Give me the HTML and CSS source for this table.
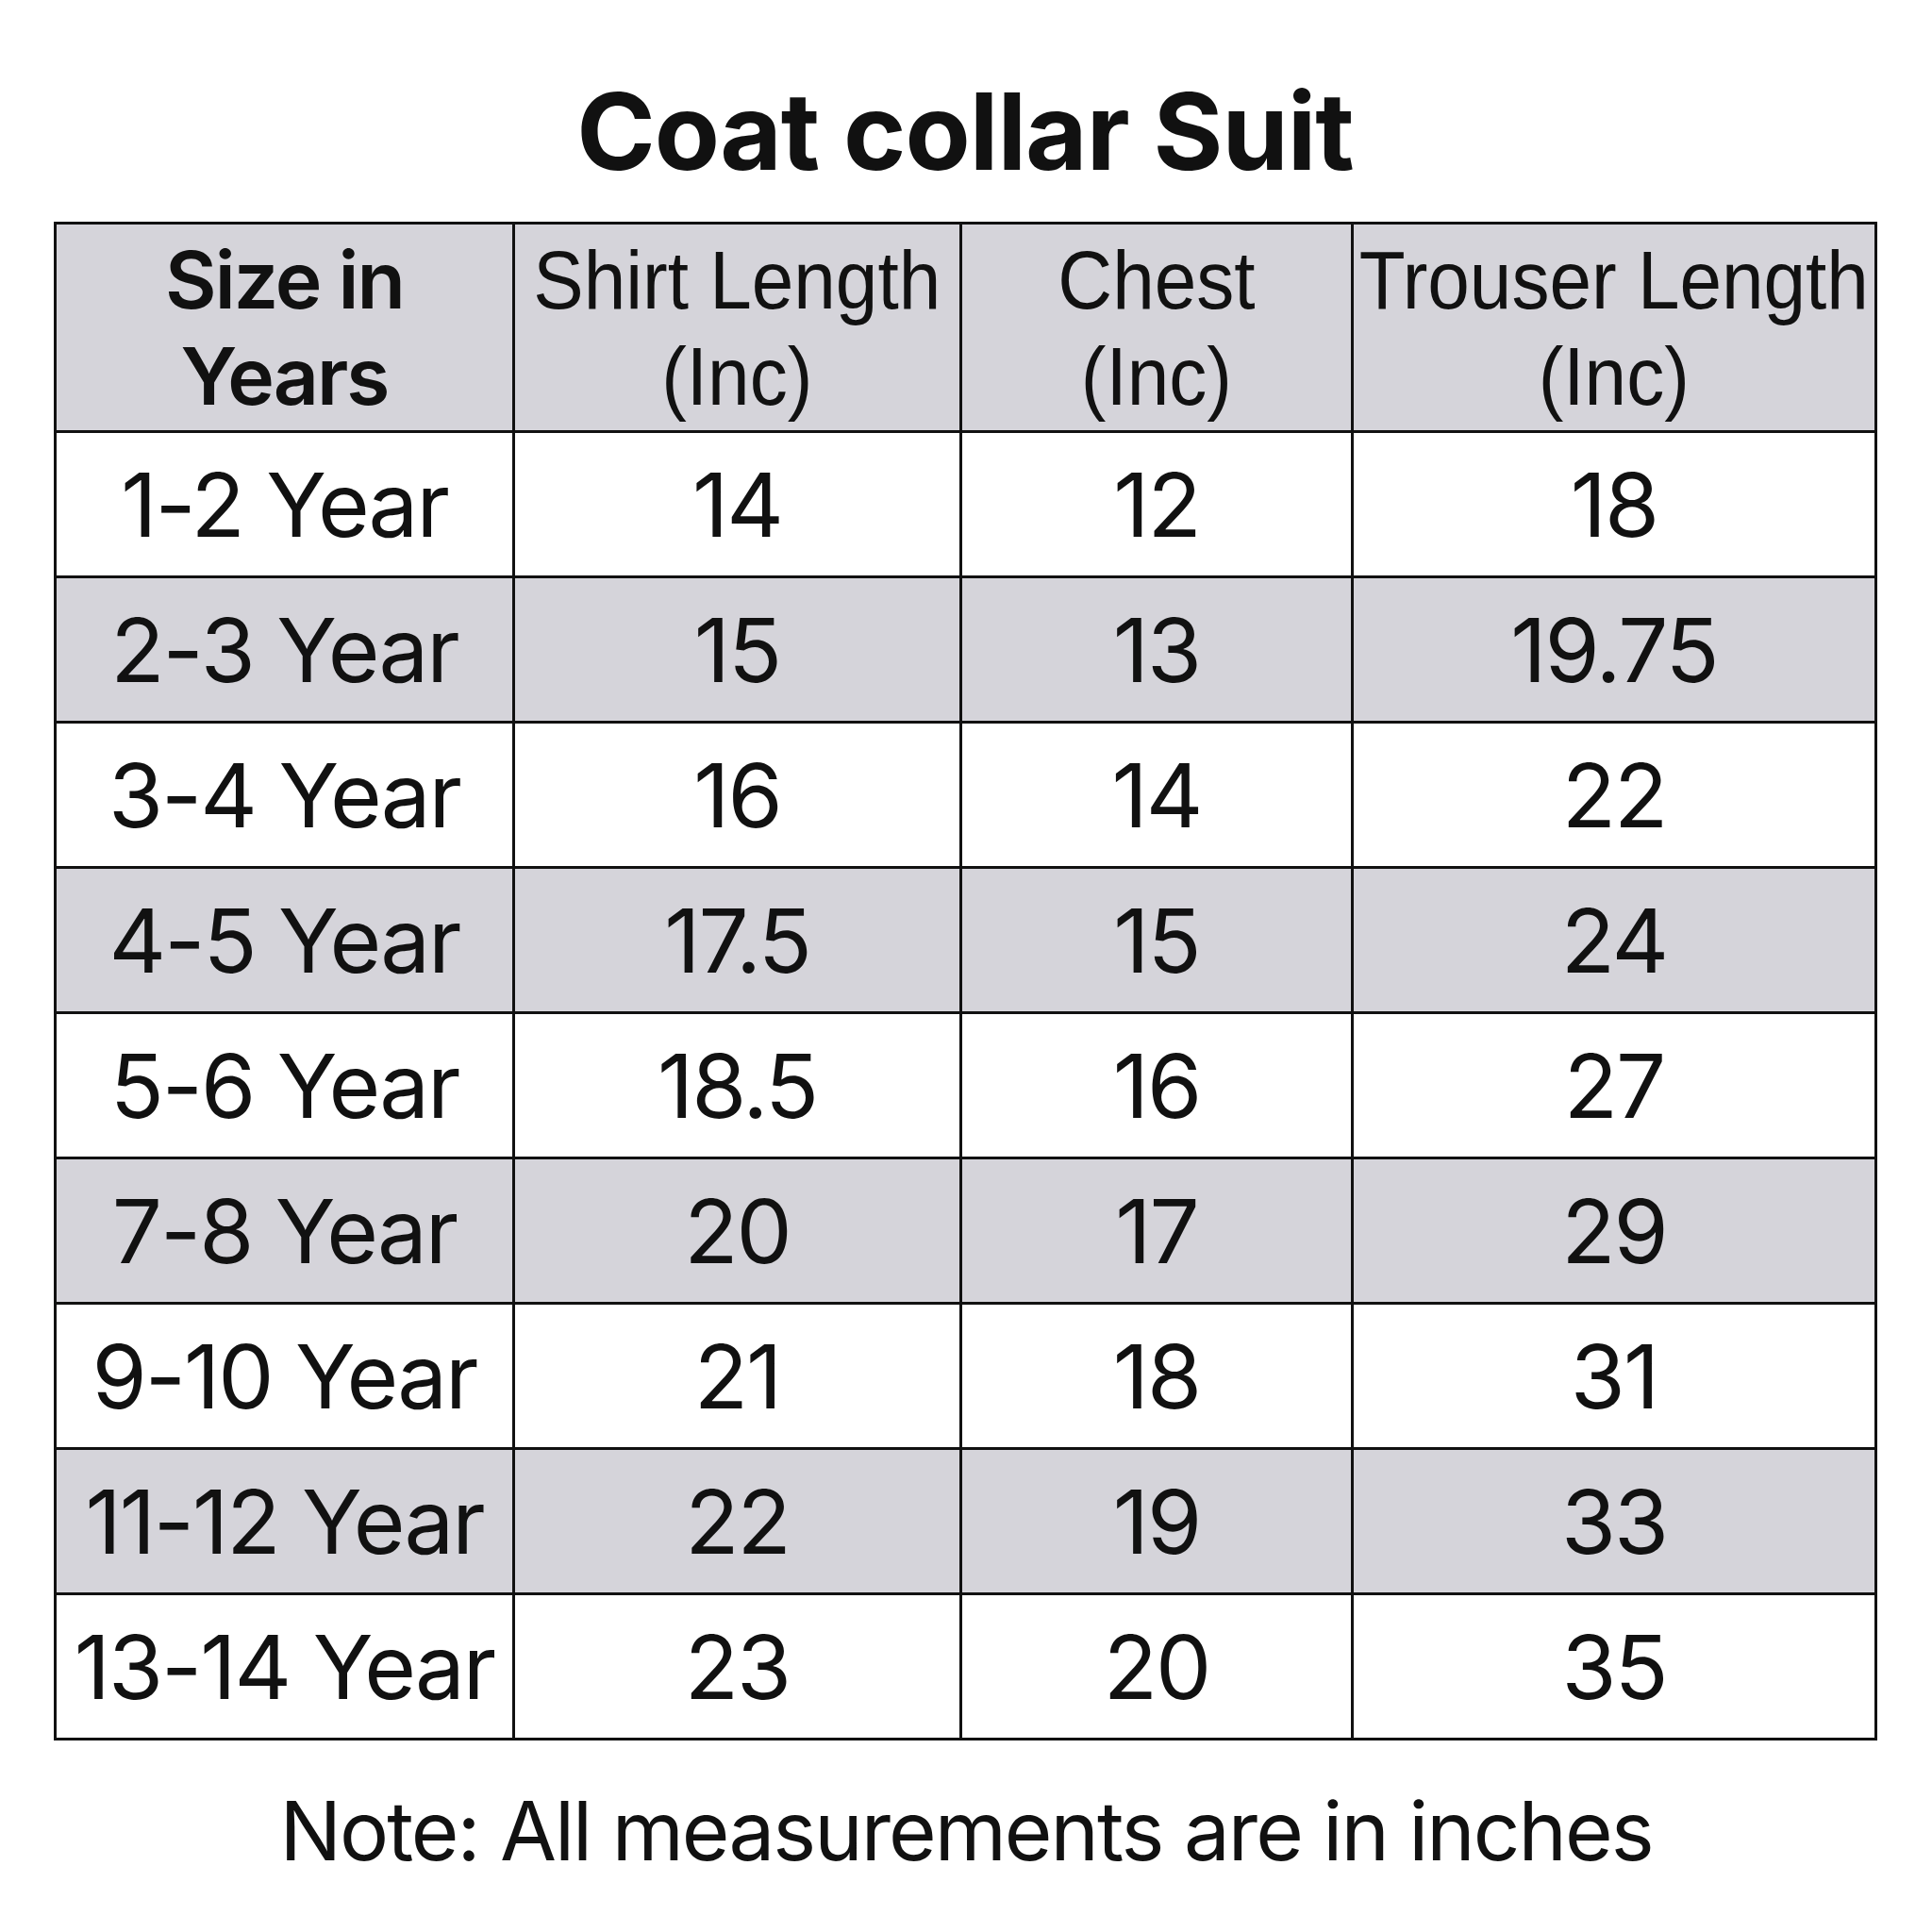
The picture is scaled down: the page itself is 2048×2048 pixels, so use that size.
FILE: index.html
```html
<!DOCTYPE html>
<html lang="en">
<head>
<meta charset="utf-8">
<title>Coat collar Suit</title>
<link rel="stylesheet" href="styles.css">
</head>
<body>
<main class="page">
  <h1 class="title">Coat collar Suit</h1>
  <table class="chart">
    <colgroup>
      <col class="c1"><col class="c2"><col class="c3"><col class="c4">
    </colgroup>
    <thead>
      <tr>
        <th class="first">Size in<br>Years</th>
        <th><div class="hcell"><span class="hd">Shirt Length<br>(Inc)</span></div></th>
        <th><div class="hcell"><span class="hd">Chest<br>(Inc)</span></div></th>
        <th><div class="hcell"><span class="hd">Trouser Length<br>(Inc)</span></div></th>
      </tr>
    </thead>
    <tbody>
      <tr><td>1-2 Year</td><td>14</td><td>12</td><td>18</td></tr>
      <tr class="shade"><td>2-3 Year</td><td>15</td><td>13</td><td>19.75</td></tr>
      <tr><td>3-4 Year</td><td>16</td><td>14</td><td>22</td></tr>
      <tr class="shade"><td>4-5 Year</td><td>17.5</td><td>15</td><td>24</td></tr>
      <tr><td>5-6 Year</td><td>18.5</td><td>16</td><td>27</td></tr>
      <tr class="shade"><td>7-8 Year</td><td>20</td><td>17</td><td>29</td></tr>
      <tr><td>9-10 Year</td><td>21</td><td>18</td><td>31</td></tr>
      <tr class="shade"><td>11-12 Year</td><td>22</td><td>19</td><td>33</td></tr>
      <tr><td>13-14 Year</td><td>23</td><td>20</td><td>35</td></tr>
    </tbody>
  </table>
  <p class="note">Note: All measurements are in inches</p>
</main>
</body>
</html>
```
FILE: styles.css
```css
html, body {
  margin: 0;
  padding: 0;
  background: #ffffff;
}

.page {
  width: 2048px;
  min-height: 2048px;
  padding-top: 69px;
  box-sizing: border-box;
  display: flex;
  flex-direction: column;
  align-items: flex-start;
  font-family: Inter, "Liberation Sans", sans-serif;
  color: #111111;
}

.title {
  align-self: center;
  margin: 0;
  font-size: 113px;
  line-height: 140px;
  font-weight: 700;
  letter-spacing: -1px;
  transform: translateX(-1px);
}

.chart {
  margin: 26px 0 0 57px;
  width: 1933px;
  table-layout: fixed;
  border-collapse: collapse;
  border: 3px solid #111111;
}

.c1 { width: 486px; }
.c2 { width: 474px; }
.c3 { width: 415px; }
.c4 { width: 555px; }

.chart th,
.chart td {
  border: 3px solid #111111;
  padding: 0;
  text-align: center;
  vertical-align: middle;
  white-space: nowrap;
}

.chart thead th {
  height: 216px;
  background: #d5d4da;
  font-family: "Liberation Sans", Arial, sans-serif;
  font-weight: 400;
  font-size: 88px;
  line-height: 102px;
  padding-top: 2px;
}

.hcell {
  display: flex;
  justify-content: center;
}

.hd {
  display: inline-block;
  transform: scaleX(0.91);
}

.chart thead th.first {
  font-family: Inter, "Liberation Sans", sans-serif;
  font-weight: 600;
  font-size: 84px;
  letter-spacing: -2px;
}

.chart td {
  height: 151px;
  font-size: 94px;
  line-height: 100px;
  font-weight: 400;
  letter-spacing: -2px;
}

.chart tr.shade td {
  background: #d5d4da;
}

.note {
  align-self: center;
  margin: 46px 0 0 0;
  font-size: 87px;
  line-height: 100px;
  font-weight: 400;
  letter-spacing: -2px;
}
```
